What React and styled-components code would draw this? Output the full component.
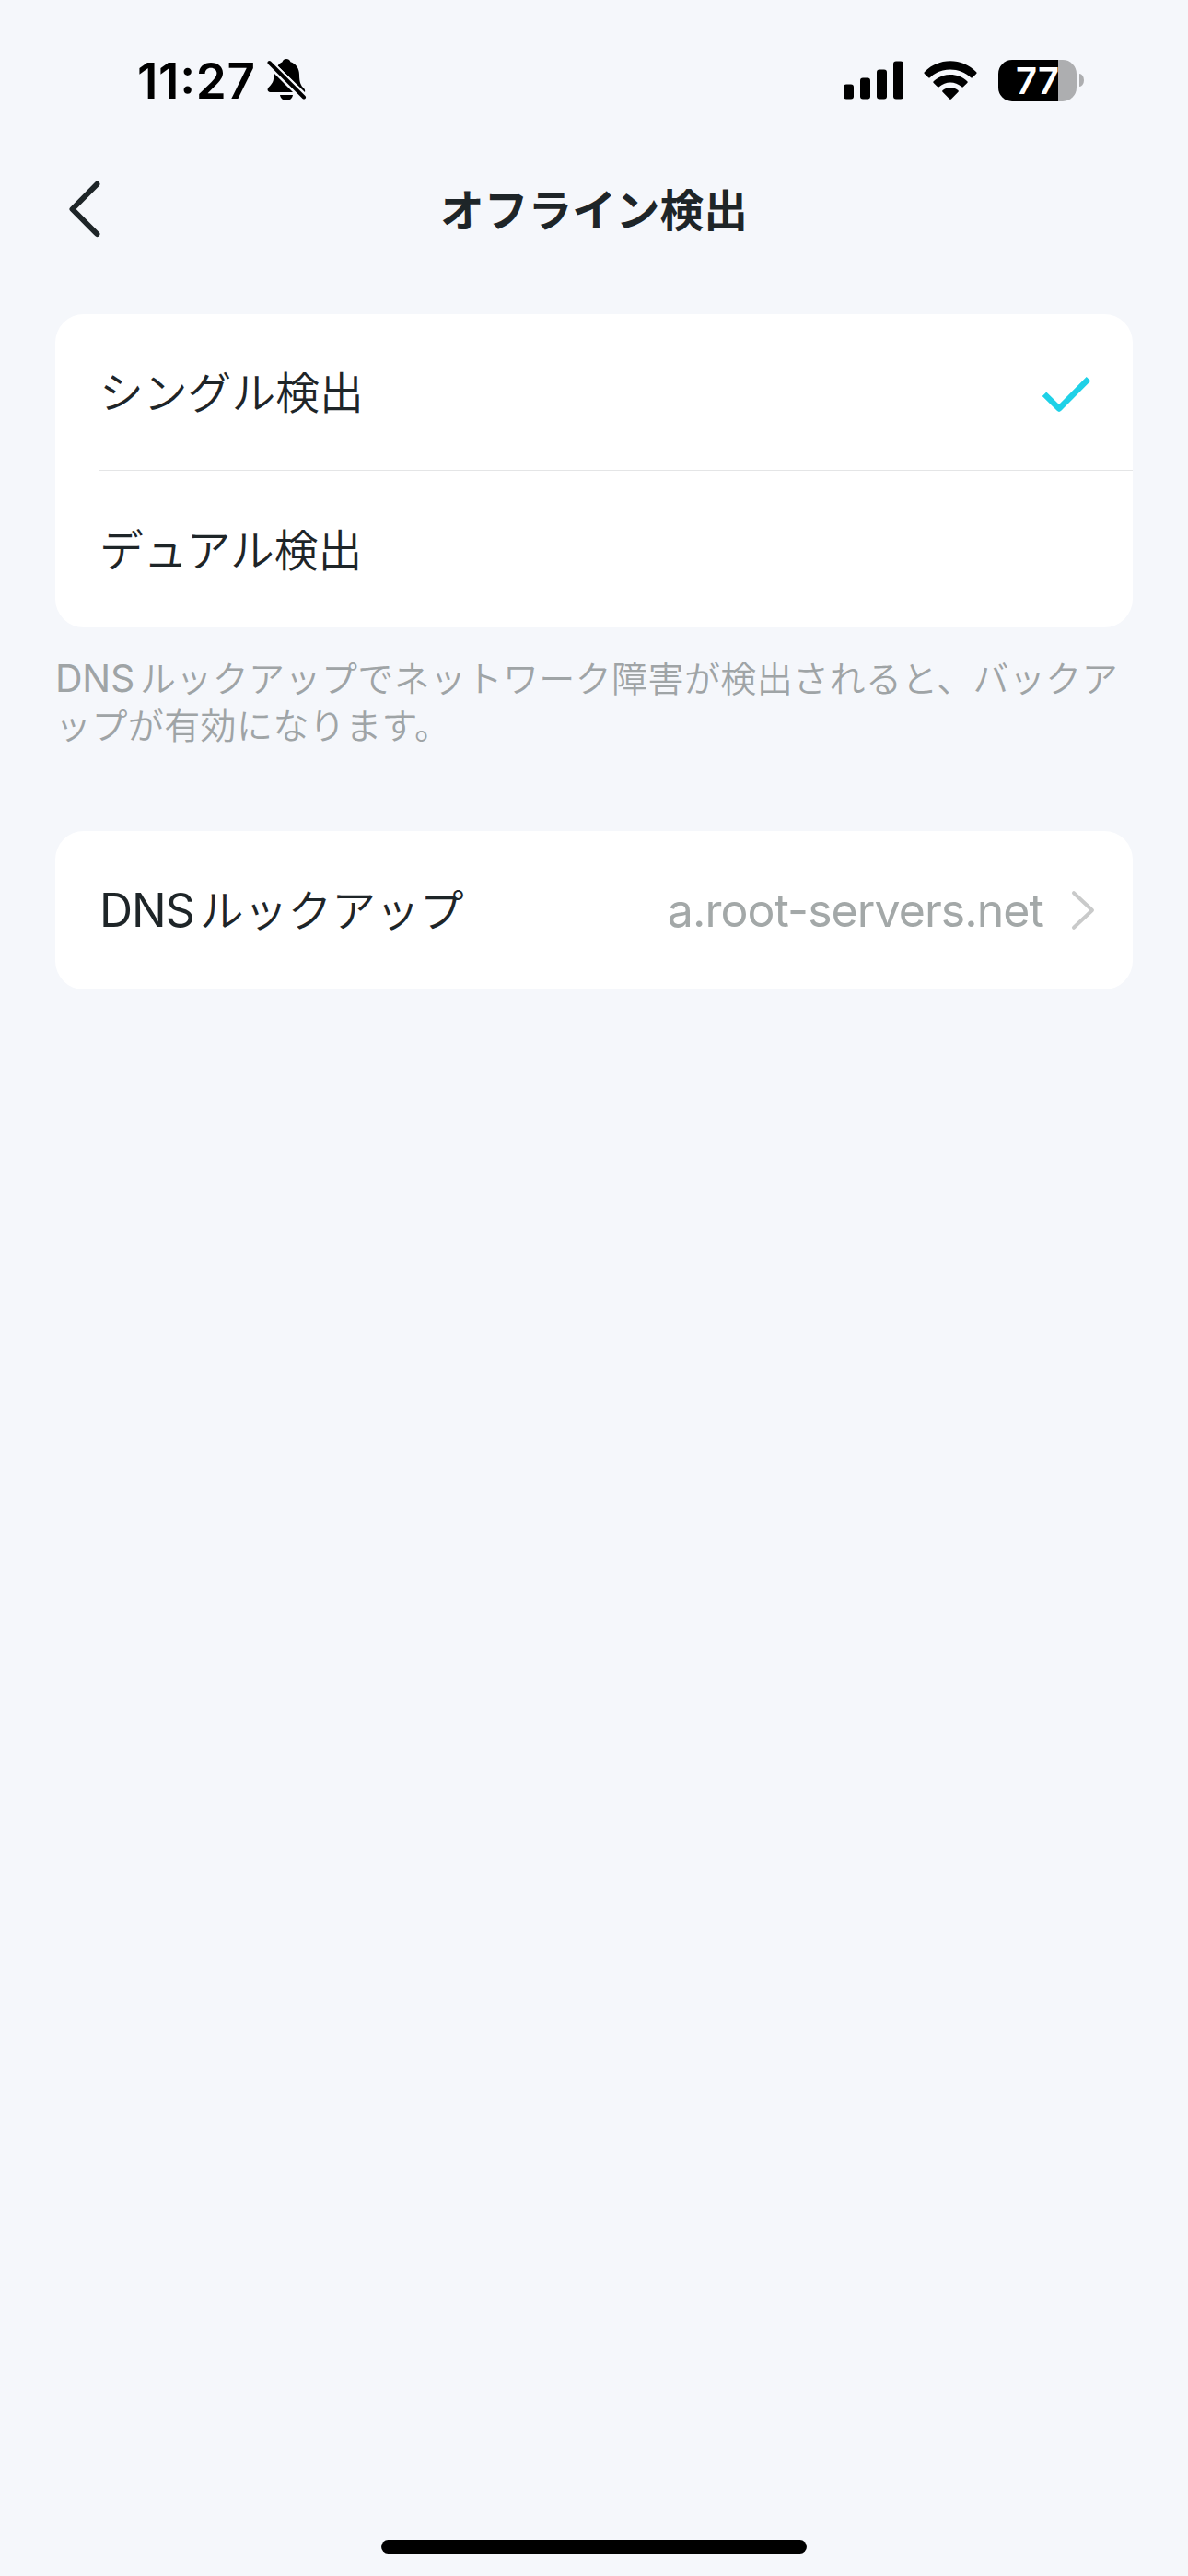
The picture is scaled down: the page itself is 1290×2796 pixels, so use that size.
import React from "react";
import styled, { createGlobalStyle } from "styled-components";

const GlobalStyle = createGlobalStyle`
  * { box-sizing: border-box; }
  body { margin: 0; background: #f5f7fb; }
`;

const Screen = styled.div`
  display: flex;
  flex-direction: column;
  width: 1290px;
  height: 2796px;
  background: #f5f7fb;
  color: #1e2528;
  font-family: "Noto Sans CJK JP", sans-serif;
`;

const StatusBar = styled.header`
  display: flex;
  align-items: center;
  justify-content: space-between;
  height: 174px;
  padding: 0 113px 0 149px;
  color: #000;
`;

const StatusGroup = styled.div`
  display: flex;
  align-items: center;
`;

const Clock = styled.time`
  width: 141px;
  padding-top: 1px;
  font: 600 53px/60px Inter, sans-serif;
  font-feature-settings: "case" 1;
  letter-spacing: 0.7px;
  white-space: nowrap;
`;

const Glyph = styled.svg`
  display: block;
  flex: none;
  margin-left: ${(p) => p.$gap || 0}px;
`;

const Battery = styled.div`
  display: flex;
  align-items: center;
  gap: 3px;
  margin-left: 23px;
`;

const BatteryBody = styled.div`
  display: flex;
  align-items: center;
  justify-content: center;
  width: 85px;
  height: 45px;
  border-radius: 15px;
  background: linear-gradient(to right, #000 65px, #adaeb0 65px);
  color: #fff;
  font: 600 40px/45px Inter, sans-serif;
`;

const BatteryCap = styled.div`
  width: 5px;
  height: 14px;
  border-radius: 0 5px 5px 0 / 0 7px 7px 0;
  background: #adaeb0;
`;

const NavBar = styled.nav`
  display: grid;
  grid-template-columns: 150px 1fr 150px;
  align-items: center;
  height: 107px;
  padding-bottom: 2px;
`;

const BackButton = styled.button`
  display: flex;
  padding: 0 0 0 70px;
  border: 0;
  background: none;
`;

const Title = styled.h1`
  margin: 0;
  padding-bottom: 2px;
  text-align: center;
  font-size: 47.7px;
  font-weight: 700;
  line-height: 60px;
`;

const Content = styled.main`
  flex: 1;
  padding: 60px 60px 0;
`;

const Card = styled.section`
  border-radius: 31px;
  background: #fff;
  overflow: hidden;
`;

const Row = styled.div`
  display: flex;
  align-items: center;
  height: ${(p) => p.$height || 170}px;
  margin-left: 48px;
  padding-right: ${(p) => p.$end || 44}px;
  border-bottom: ${(p) => (p.$divided ? "1px solid #e4e5e6" : "0")};
`;

const Label = styled.span`
  flex: 1;
  padding-bottom: 3px;
  font-size: 47.8px;
  font-weight: 350;
  line-height: 60px;
  white-space: nowrap;
`;

const Latin = styled.span`
  font-family: Inter, sans-serif;
  font-size: ${(p) => p.$size}px;
  font-weight: 400;
  letter-spacing: ${(p) => p.$tracking || 0}px;
  margin-right: ${(p) => p.$after || 0}px;
`;

const Value = styled.span`
  color: #a3a8a8;
  font: 400 50px/60px Inter, sans-serif;
  letter-spacing: -0.93px;
`;

const Note = styled.p`
  margin: 0;
  height: 221px;
  padding-top: 29px;
  color: #9fa4a6;
  font-size: 39px;
  font-weight: 350;
  letter-spacing: 0.4px;
  line-height: 48.500px;
  white-space: nowrap;
`;

const HomeArea = styled.footer`
  display: flex;
  justify-content: center;
  padding-bottom: 24px;
`;

const HomeIndicator = styled.div`
  width: 462px;
  height: 15px;
  border-radius: 8px;
  background: #000;
`;

const BellOffIcon = () => (
  <Glyph width="43" height="48" viewBox="0 0 43 48">
    <path d="M11.5 8.5C13 6 15 5 16.5 4.2C17.3 2 19 1 21 1S24.700 2 25.500 4.200C31 6 35 11 35 18C35 27 37 30 40 33C41 34 41.500 35.500 41 37Z" />
    <path d="M7.500 16.500L28 37H3.500C.5 37-.3 34 1.500 32C5.500 27.500 7.500 26 7.500 16.500Z" />
    <path d="M14 40H28C27.500 43.800 24.500 46 21 46S14.500 43.800 14 40Z" />
    <path d="M2.500 5L40 42.500" stroke="#f5f7fb" strokeWidth="8" />
    <path d="M2.500 5L40 42.500" stroke="#000" strokeWidth="4" strokeLinecap="round" />
  </Glyph>
);

const SignalIcon = () => (
  <Glyph width="65" height="42" viewBox="0 0 65 42">
    <rect x="0" y="25.500" width="11" height="16" rx="3" />
    <rect x="18" y="18.500" width="11" height="23" rx="3" />
    <rect x="36" y="9.500" width="11" height="32" rx="3" />
    <rect x="54" y="0.500" width="11" height="41" rx="3" />
  </Glyph>
);

const WifiIcon = () => (
  <Glyph $gap={22.5} width="58" height="43" viewBox="0 0 58 43">
    <path d="M.8 12.200C16-3.700 42-3.700 57.200 12.200Q58 13.100 57.200 13.900L52.800 18.200Q52 19 51.200 18.200C39 6.500 19 6.500 6.800 18.200Q6 19 5.200 18.200L.8 13.900Q0 13.100.8 12.200Z" />
    <path d="M10.700 22.200C21 12.600 37 12.600 47.300 22.200Q48.200 23.100 47.300 24L42.900 28.300Q42.100 29.100 41.300 28.300C34 22 24 22 16.700 28.300Q15.900 29.100 15.100 28.300L10.700 24Q9.800 23.100 10.700 22.200Z" />
    <path d="M20.600 32C25.500 28 32.500 28 37.400 32Q38.400 32.900 37.500 33.800L29.900 41.400Q29 42.300 28.100 41.400L20.500 33.800Q19.600 32.900 20.600 32Z" />
  </Glyph>
);

const BackIcon = () => (
  <Glyph width="45" height="70" viewBox="0 0 45 70" fill="none">
    <path d="M35.400 7.800L8.500 35L35.400 62" stroke="#1e2528" strokeWidth="6" strokeLinecap="round" strokeLinejoin="round" />
  </Glyph>
);

const CheckIcon = () => (
  <Glyph width="56" height="44" viewBox="0 0 56 44" fill="none">
    <path d="M4 23.700L20 39.500L52 7.300" stroke="#1fd1e7" strokeWidth="6.400" strokeLinejoin="round" />
  </Glyph>
);

const DisclosureIcon = () => (
  <Glyph $gap={29} width="28" height="44" viewBox="0 0 28 44" fill="none">
    <path d="M4 3.200L24 22L4 40.800" stroke="#c9caca" strokeWidth="4" strokeLinecap="round" strokeLinejoin="round" />
  </Glyph>
);

export default function App() {
  return (
    <Screen>
      <GlobalStyle />
      <StatusBar>
        <StatusGroup>
          <Clock>11:27</Clock>
          <BellOffIcon />
        </StatusGroup>
        <StatusGroup>
          <SignalIcon />
          <WifiIcon />
          <Battery>
            <BatteryBody>77</BatteryBody>
            <BatteryCap />
          </Battery>
        </StatusGroup>
      </StatusBar>
      <NavBar>
        <BackButton aria-label="戻る">
          <BackIcon />
        </BackButton>
        <Title>オフライン検出</Title>
      </NavBar>
      <Content>
        <Card>
          <Row $divided>
            <Label>シングル検出</Label>
            <CheckIcon />
          </Row>
          <Row>
            <Label>デュアル検出</Label>
          </Row>
        </Card>
        <Note>
          <Latin $size={41} $tracking={-0.3} $after={6}>DNS</Latin>
          ルックアップでネットワーク障害が検出されると、バックア<br />
          ップが有効になります。
        </Note>
        <Card>
          <Row $height={172} $end={40}>
            <Label>
              <Latin $size={50} $tracking={-1} $after={6}>DNS</Latin>
              ルックアップ
            </Label>
            <Value>a.root-servers.net</Value>
            <DisclosureIcon />
          </Row>
        </Card>
      </Content>
      <HomeArea>
        <HomeIndicator />
      </HomeArea>
    </Screen>
  );
}
